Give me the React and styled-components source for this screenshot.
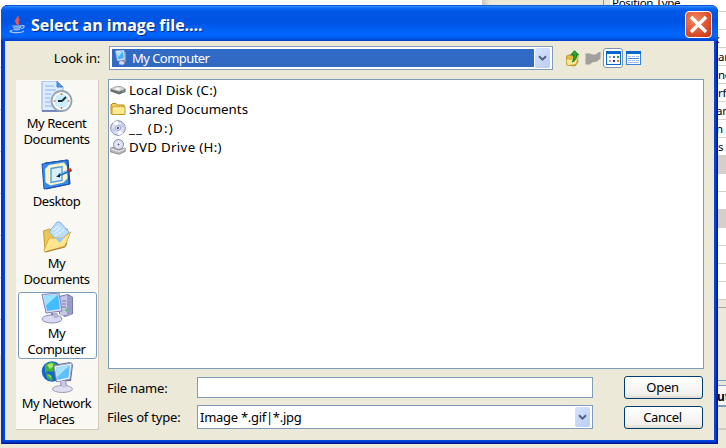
import React from 'react';
import styled, { createGlobalStyle } from 'styled-components';

const Global = createGlobalStyle`
  * { box-sizing: border-box; }
  body { margin: 0; overflow: hidden; font-family: "Noto Sans", "DejaVu Sans", sans-serif; font-size: 13px; color: #000; }
  svg { display: block; flex: none; }
  button, input { font: inherit; }
`;

const Screen = styled.div`
  position: relative;
  width: 726px;
  height: 448px;
  overflow: hidden;
  background: #ece9d8;
`;

/* Application behind the dialog */
const Backdrop = styled.div`
  display: grid;
  grid-template-columns: 482px 122px 122px;
  height: 448px;
`;
const LeftSheet = styled.div`
  height: 443px;
  padding-top: 26px;
  background: linear-gradient(#fff 355px, #ece9d8 355px);
`;
const SheetLine = styled.div`
  height: 42px;
  border-bottom: 1px solid #c3c8f0;
`;
const MidSheet = styled.div`
  height: 420px;
  background: linear-gradient(90deg, #cac7b9, #ece9d8 8px);
  border-right: 1px solid #7f9db9;
`;
const RightSheet = styled.div`
  display: flex;
  flex-direction: column;
  padding-left: 6px;
`;
const Cell = styled.div`
  flex: none;
  height: ${p => p.$h || 18}px;
  padding-left: ${p => p.$pad || 0}px;
  line-height: ${p => p.$line || 17}px;
  font-size: 11.5px;
  letter-spacing: -0.3px;
  white-space: nowrap;
  overflow: hidden;
  border-bottom: 1px solid #d4d0c8;
  background: ${p => (p.$shade ? '#d4d0c8' : '#fff')};
`;
const FootPanel = styled.div`
  height: 74px;
  margin-top: 7px;
  border-top: 1px solid #aca899;
  border-bottom: 1px solid #7f9db9;
`;
const FootButton = styled.div`
  height: 22px;
  margin-top: 4px;
  padding-left: 107px;
  border-top: 1px solid #7f9db9;
  border-bottom: 2px solid #7f9db9;
  background: #f7f6f1;
  font-weight: bold;
  font-size: 12px;
  line-height: 22px;
`;
const FootLine = styled.div`
  height: 23px;
  border-bottom: 2px solid #d0cdbf;
`;

/* Dialog */
const Dialog = styled.div`
  position: absolute;
  left: 1px;
  top: 5px;
  width: 717px;
  height: 439px;
  display: flex;
  flex-direction: column;
  padding: 0 4px 4px;
  border-radius: 7px 7px 0 0;
  background: #0044dc;
  box-shadow: inset 1px 0 #0831d9, inset -1px -1px #001890, inset -2px -2px #0024b4, inset 2px 0 #0030c8;
`;
const TitleBar = styled.div`
  flex: none;
  height: 36px;
  margin: 0 -4px;
  padding: 3px 6px 0 8px;
  display: flex;
  align-items: center;
  border-radius: 7px 7px 0 0;
  background: linear-gradient(#0048c8 0, #2b83fa 1.5px, #0f6cf3 3px, #0058e6 6px, #0053e1 16px, #005cf2 23px, #0066ff 29px, #0062f8 32px, #0048cc 35px, #003dd7 36px);
`;
const Title = styled.h1`
  flex: 1;
  margin: 0 0 0 5px;
  font: bold 16px/22px "Open Sans", sans-serif;
  letter-spacing: -0.05px;
  color: #fff;
  text-shadow: 1px 1px #0b2a80;
`;
const CloseButton = styled.button`
  width: 27px;
  height: 27px;
  padding: 0;
  display: grid;
  place-items: center;
  border: 1px solid #fff;
  border-radius: 4px;
  background: radial-gradient(circle at 35% 30%, #f08860, #e0532e 55%, #bf3412);
`;
const Body = styled.div`
  flex: 1;
  background: #ece9d8;
  display: grid;
  grid-template-columns: 83px 596px;
  column-gap: 9px;
  grid-template-rows: 24px 290px 54px;
  row-gap: 9px;
  padding: 5px 10px 0 11px;
`;
const LookRow = styled.div`
  grid-column: 1 / -1;
  display: flex;
  align-items: center;
`;
const Label = styled.label`
  text-align: ${p => p.$align || 'left'};
  width: ${p => p.$w}px;
  letter-spacing: -0.2px;
  white-space: nowrap;
`;
const Select = styled.div`
  display: flex;
  width: ${p => p.$w}px;
  height: 24px;
  margin-left: ${p => p.$ml || 0}px;
  padding: 2px;
  background: #fff;
  border: 1px solid #7f9db9;
`;
const SelectValue = styled.div`
  flex: 1;
  display: flex;
  align-items: center;
  gap: 3px;
  padding-left: ${p => (p.$active ? 1 : 0)}px;
  margin-right: 1px;
  color: ${p => (p.$active ? '#fff' : '#000')};
  background: ${p => (p.$active ? '#316ac5' : '#fff')};
  letter-spacing: ${p => (p.$active ? -0.55 : -0.28)}px;
`;
const DropArrow = styled.span`
  width: 15px;
  margin: -1px 0;
  display: grid;
  place-items: center;
  border-radius: 2px;
  background: linear-gradient(135deg, #d8e4ff, #b9cbf5);
`;
const Tools = styled.div`
  display: flex;
  align-items: center;
  margin-left: 10px;
`;
const ToolButton = styled.button`
  width: 20px;
  height: 20px;
  padding: 0;
  display: grid;
  place-items: center;
  border: 1px solid ${p => (p.$on ? '#7595b5' : 'transparent')};
  border-radius: 3px;
  background: ${p => (p.$on ? '#fff' : 'transparent')};
`;
const Places = styled.nav`
  grid-row: 2 / 4;
  height: 350px;
  margin-top: 1px;
  padding: 0 2px;
  background: #f9f8f3;
  border-right: 1px solid #cfccbd;
  border-bottom: 1px solid #cfccbd;
`;
const Place = styled.div`
  height: ${p => p.$h}px;
  width: 79px;
  padding: ${p => p.$top}px 2px 0 0;
  display: flex;
  flex-direction: column;
  align-items: center;
  gap: ${p => (p.$selected ? 0 : 2)}px;
  text-align: center;
  line-height: 16px;
  white-space: pre;
  border: solid ${p => (p.$selected ? '#7b9ebd' : 'transparent')};
  border-width: ${p => (p.$selected ? '1px' : '0 1px')};
  border-radius: 3px;
  background: ${p => (p.$selected ? '#fff' : 'transparent')};
`;
const PlaceName = styled.span`
  letter-spacing: -0.45px;
`;
const FileList = styled.div`
  background: #fff;
  border: 1px solid #7f9db9;
  font-size: 13.3px;
`;
const FileRow = styled.div`
  height: 19px;
  padding-left: 1px;
  display: flex;
  align-items: center;
  gap: 3px;
  letter-spacing: ${p => p.$ls || 0}px;
`;
const Form = styled.div`
  display: grid;
  grid-template-columns: 90px 396px 110px;
  grid-template-rows: 23px 24px;
  row-gap: 6px;
  align-items: center;
  align-content: start;
  margin: -2px 0 0 -1px;
`;
const Input = styled.input`
  width: 396px;
  height: 21px;
  padding: 0 3px;
  border: 1px solid #7f9db9;
  background: #fff;
  outline: 0;
`;
const Button = styled.button`
  width: 79px;
  height: 23px;
  margin-left: 31px;
  padding: 0 2px 0 0;
  line-height: 19px;
  letter-spacing: -0.3px;
  border: 1px solid #003c74;
  border-radius: 3px;
  color: #000;
  background: linear-gradient(#fff, #f2f1ec 80%, #dedbd0);
`;

const Chevron = () => (
  <svg width="9" height="7" viewBox="0 0 9 7"><path d="M1 1.2l3.5 3.5L8 1.2" fill="none" stroke="#4d6185" strokeWidth="2" /></svg>
);

const JavaIcon = () => (
  <svg width="17" height="18" viewBox="0 0 17 18" fill="none">
    <path d="M8.6 0.5c1.8 2-3 3.3-1.5 5.3.6.9 1.1 1.4.8 2.6M10.5 3.2C8 4.7 8.300 5.500 9.100 6.500c.6.8.2 1.500-.4 2" stroke="#f0564a" strokeWidth="1.700" />
    <path d="M3.500 9.500c-.5.9 8 1 9 0M4 11.300c1 1 6.500 1 8 0M4.600 13.300c1 .8 5 .8 6.500 0M12.800 9.700c3.500-.7 3 2.200-.6 3" stroke="#a9c6ec" strokeWidth="1.200" />
    <path d="M3.500 14.300c-5 1.300-1 2.400 4 2.300 4.500 0 8-.9 6.800-2" stroke="#a9c6ec" strokeWidth="1.200" />
  </svg>
);

const MiniMonitor = () => (
  <svg width="16" height="16" viewBox="0 0 16 16">
    <path d="M10 1.500l3 1v9l-3 2z" fill="#8d92bc" />
    <path d="M2.500 1l8.500-1 1 9.500-7.500 1.500z" fill="#ebf4ff" stroke="#9aaad1" strokeWidth=".7" />
    <path d="M3.500 2.200l6.500-1 1 7-5.800 1.400z" fill="#45b4f4" />
    <path d="M3.500 2.200l6.500-1-5 6z" fill="#a5e6fd" />
    <path d="M6 11.500l3-1 3 2.500-2 2-4-.4z" fill="#d8daf0" stroke="#777da7" strokeWidth=".5" />
  </svg>
);

const UpFolder = () => (
  <svg width="16" height="17" viewBox="0 0 16 17">
    <path d="M1.500 6l3-1 2 1 5-1 1.500 7-3 4-8-1z" fill="#e6c244" stroke="#a47b16" strokeWidth=".7" />
    <path d="M1.500 8.500l4 1 8-3-2.500 8L2 15.500z" fill="#ffec92" stroke="#b98c1b" strokeWidth=".6" />
    <path d="M9.500 .7L13.800 5h-2.300c0 4-1 6-4.500 7 1.500-2 2-4 1.600-7H5.700z" fill="#2ea52c" stroke="#086b12" strokeWidth=".8" />
  </svg>
);
const NewFolderDisabled = () => (
  <svg width="16" height="14" viewBox="0 0 16 14"><path d="M.5 2.500h5l1 1H11l1-1.500 3.500-1.500v7L12 10.500l-5 1-2 2H.5z" fill="#a0a09c" /></svg>
);
const ListIcon = () => (
  <svg width="15" height="14" viewBox="0 0 15 14" shapeRendering="crispEdges">
    <rect width="15" height="14" fill="#0867cf" /><rect x="1" y="3" width="13" height="10" fill="#fff" />
    <g><rect x="3" y="5" width="2" height="2" fill="#a3a3df" /><rect x="7" y="5" width="2" height="2" fill="#4a66ce" /><rect x="11" y="5" width="2" height="2" fill="#2b9d2b" /><rect x="3" y="9" width="2" height="2" fill="#e38d7d" /><rect x="7" y="9" width="2" height="2" fill="#153b94" /><rect x="11" y="9" width="2" height="2" fill="#d78414" /></g>
  </svg>
);
const DetailsIcon = () => (
  <svg width="15" height="14" viewBox="0 0 15 14" shapeRendering="crispEdges">
    <rect width="15" height="14" fill="#3284e0" /><rect width="15" height="3" fill="#0867cf" /><rect x="1" y="3" width="13" height="10" fill="#fff" />
    <path d="M2 5.500h3M6 5.500h3M10 5.500h3M2 9.500h3M6 9.500h3M10 9.500h3M2 11.500h11" stroke="#a5bee8" />
    <path d="M2 7.500h11" stroke="#4687cb" />
  </svg>
);

const RecentIcon = () => (
  <svg width="32" height="32" viewBox="0 0 32 32">
    <path d="M1 0h15l6 6v24H1z" fill="#dcecff" stroke="#8fabe4" />
    <path d="M16 0v6h6" fill="#4c93e4" stroke="#4c7fd0" />
    <path d="M4 5h9M4 9h11M4 13h6M4 17h5M4 21h5M4 25h7" stroke="#a9c6f2" strokeWidth="1.300" />
    <path d="M1 30h21" stroke="#5c6fae" strokeWidth="1.500" />
    <circle cx="20.500" cy="20" r="10" fill="#e4f5ff" stroke="#95a3b3" strokeWidth="1.800" />
    <circle cx="20.500" cy="20" r="8" fill="#cbeefd" stroke="#fff" strokeWidth="1.500" />
    <path d="M20.500 12v2M20.500 26v2M12.500 20h2M26.500 20h2" stroke="#e87936" strokeWidth="1.600" />
    <path d="M25 16l-4 4M17 20h4" stroke="#17273b" strokeWidth="1.800" fill="none" />
  </svg>
);
const DesktopIcon = () => (
  <svg width="32" height="32" viewBox="0 0 32 32">
    <path d="M4 4L27 1l2 24L5 30z" fill="#1e63c8" stroke="#174196" />
    <path d="M1 5l25-4 2 24-25 5z" fill="#368dea" stroke="#1d55b1" />
    <path d="M4 10l4-4 15-2.500 3 4 .5 12-4 4-13 3-5-3z" fill="#fff4c7" />
    <path d="M10 9.500l11-2v14l-11 2z" fill="#d9f0ff" stroke="#4b9ae2" strokeWidth="1.300" />
    <path d="M18 16l10-4" stroke="#1769bc" strokeWidth="2.800" /><path d="M19 15l7-3" stroke="#9bcfff" />
    <path d="M27.500 12l3-1.500" stroke="#c83523" strokeWidth="3.500" /><path d="M15 17.500l4-2.500v3.500z" fill="#15202f" />
  </svg>
);
const DocumentsIcon = () => (
  <svg width="32" height="32" viewBox="0 0 32 32">
    <path d="M2.500 10l6-2 4 3 14-3-2 15L4 29z" fill="#eec557" stroke="#c99c34" />
    <path d="M8 11L16 1l3 0 9 10-9 12z" fill="#b9ddfb" stroke="#86b1dc" />
    <path d="M12 9l6-4M13 12l7-5M14 15l9-6" stroke="#dff1ff" strokeWidth="1.200" />
    <path d="M3 29L8 17l14 0 7.500-6L24 25 4 31z" fill="#ffe68c" stroke="#dcaa40" />
    <path d="M14 17l5 5 7-9-4 4z" fill="#95cbf4" />
    <path d="M4.500 31l19.500-5 2-4" stroke="#a77c2b" fill="none" />
  </svg>
);
const ComputerIcon = () => (
  <svg width="32" height="32" viewBox="0 0 32 32">
    <path d="M18 3l9-2 5 3v17l-8 3-6-3z" fill="#7779ad" />
    <path d="M19 4l7-2v20l-7 1z" fill="#c7c6e6" /><path d="M26 2l5 2v17l-5 2z" fill="#9b9acb" />
    <path d="M21 8h4M21 11h4M21 14h4" stroke="#7779af" /><circle cx="26" cy="17" r="1.800" fill="#69bf82" />
    <path d="M1 1.500L18 0l3 18-16 2z" fill="#d7def5" stroke="#7e80b5" />
    <path d="M3 3l14-1.500 2 14.500-13 2z" fill="#45bcff" /><path d="M3 3l14-1.500L4.500 13z" fill="#98e3ff" />
    <path d="M10 20h6l2 5H9z" fill="#8889bc" /><ellipse cx="11" cy="26" rx="10" ry="4" fill="#dadaf0" stroke="#8f8fbb" />
    <path d="M12 20l4-.5 1 5-4 1z" fill="#b5b4d8" />
  </svg>
);
const NetworkIcon = () => (
  <svg width="32" height="32" viewBox="0 0 32 32">
    <circle cx="11" cy="10.500" r="10.300" fill="#1764ce" />
    <path d="M4 4l5-3 5 1 3 4-4 1-1 4-5-1-3 2zM5 12l5 2 2 4-2 2-4-3z" fill="#40b33d" />
    <path d="M6 4l5-2 2 3-4 3zM6 13l4 2 0 2z" fill="#a8e66d" />
    <path d="M12 4l17-3 3 3-2 16-15 1z" fill="#666b9f" />
    <path d="M13 5l18-3-2 16-13 3z" fill="#edf3ff" stroke="#9499bf" />
    <path d="M15 6.500l14-2.500-1.500 12.500-11 2.500z" fill="#5fc1fb" /><path d="M15 6.500l14-2.500-13 12z" fill="#a7e1ff" />
    <path d="M19 20h6l2 7h-8z" fill="#a3a4ca" /><ellipse cx="21.500" cy="28" rx="10" ry="3.500" fill="#dedeef" stroke="#9d9bb8" />
    <path d="M20 20h4l1 6-4 1z" fill="#c9c9e3" />
  </svg>
);

const Disk = () => (
  <svg width="16" height="16" viewBox="0 0 16 16">
    <path d="M.5 7L6 4.500h5L15.500 7v3L9 12.500.5 9.500z" fill="#6c6c6c" />
    <path d="M.5 7L6 4.500h5L15.500 7 9 9.500z" fill="#d4d4d4" stroke="#999" strokeWidth=".5" />
    <path d="M4 7l4-1 3 1-3 1z" fill="#fff" /><path d="M12 9.500l2-.7" stroke="#58d060" />
  </svg>
);
const Folder = () => (
  <svg width="16" height="16" viewBox="0 0 16 16">
    <path d="M1 13V4l1.500-1.500H6L7.500 4H14v9z" fill="#f3cc53" stroke="#b78719" />
    <path d="M2 6h13v7.500H2z" fill="#ffe98e" stroke="#c99a28" /><path d="M3 7h11" stroke="#fff8ca" />
  </svg>
);
const Disc = () => (
  <svg width="16" height="16" viewBox="0 0 16 16">
    <circle cx="8" cy="8" r="7.300" fill="#dddff3" stroke="#8587ae" />
    <path d="M8 8L3 2l5-1zM8 8l5 6-5 1z" fill="#fff" /><path d="M8 8l5-6 2 5zM8 8l-5 6-2-5z" fill="#c9cbee" />
    <circle cx="8" cy="8" r="2.500" fill="#fff" stroke="#9b9cc5" /><circle cx="8" cy="8" r="1.200" fill="#4657b6" />
  </svg>
);
const DvdDrive = () => (
  <svg width="16" height="16" viewBox="0 0 16 16">
    <circle cx="8.500" cy="5.500" r="5" fill="#dfe0f2" stroke="#898bab" /><circle cx="8.500" cy="5.500" r="1.500" fill="#5865b4" stroke="#fff" />
    <path d="M.7 9l3-1 2 2 5 .5 4.500-1.500v3.500L9 15.300.7 13z" fill="#b7b7bd" stroke="#77777d" strokeWidth=".7" />
    <path d="M1 10l8 2.500 6-2.500" stroke="#ededf2" fill="none" />
  </svg>
);

const places = [
  { text: 'My Recent\nDocuments', icon: <RecentIcon />, top: 1, h: 74 },
  { text: 'Desktop', icon: <DesktopIcon />, top: 5, h: 62 },
  { text: 'My\nDocuments', icon: <DocumentsIcon />, top: 5, h: 76 },
  { text: 'My\nComputer', icon: <ComputerIcon />, top: 0, h: 67, selected: true },
  { text: 'My Network\nPlaces', icon: <NetworkIcon />, top: 2, h: 70 },
];
const files = [
  { text: 'Local Disk (C:)', icon: <Disk />, ls: 0.15 },
  { text: 'Shared Documents', icon: <Folder /> },
  { text: '__ (D:)', icon: <Disc />, ls: 1.2 },
  { text: 'DVD Drive (H:)', icon: <DvdDrive />, ls: 0.32 },
];
const cells = [
  { text: 'Position Type', pad: 2, h: 12, line: 6 }, {}, { text: ':', pad: 107 }, { text: 'an', pad: 108 },
  { text: 'nc', pad: 108 }, { text: 'rfl', pad: 108 }, { text: 'an', pad: 106 }, { text: 'n', pad: 106 },
  { text: 's', pad: 108 }, { shade: true }, {}, {}, { shade: true }, {}, {}, {}, {},
];

export default function App() {
  return (
    <Screen>
      <Global />
      <Backdrop>
        <LeftSheet>{[0, 1, 2, 3, 4, 5, 6].map(i => <SheetLine key={i} />)}</LeftSheet>
        <MidSheet />
        <RightSheet>
          {cells.map((c, i) => <Cell key={i} $h={c.h} $pad={c.pad} $shade={c.shade} $line={c.line}>{c.text}</Cell>)}
          <FootPanel />
          <FootButton>ut</FootButton>
          <FootLine />
        </RightSheet>
      </Backdrop>
      <Dialog>
        <TitleBar>
          <JavaIcon />
          <Title>Select an image file....</Title>
          <CloseButton aria-label="Close">
            <svg width="19" height="19" viewBox="0 0 19 19"><path d="M2 2l15 15M17 2L2 17" stroke="#fff" strokeWidth="3.500" /></svg>
          </CloseButton>
        </TitleBar>
        <Body>
          <LookRow>
            <Label $w={84} $align="right">Look in:</Label>
            <Select $w={444} $ml={9}>
              <SelectValue $active><MiniMonitor />My Computer</SelectValue>
              <DropArrow><Chevron /></DropArrow>
            </Select>
            <Tools>
              <ToolButton aria-label="Up one level"><UpFolder /></ToolButton>
              <ToolButton aria-label="New folder"><NewFolderDisabled /></ToolButton>
              <ToolButton $on aria-label="List"><ListIcon /></ToolButton>
              <ToolButton aria-label="Details"><DetailsIcon /></ToolButton>
            </Tools>
          </LookRow>
          <Places>
            {places.map(p => (
              <Place key={p.text} $h={p.h} $top={p.top} $selected={p.selected}>{p.icon}<PlaceName>{p.text}</PlaceName></Place>
            ))}
          </Places>
          <FileList>
            {files.map(f => <FileRow key={f.text} $ls={f.ls}>{f.icon}<span>{f.text}</span></FileRow>)}
          </FileList>
          <Form>
            <Label $w={89}>File name:</Label>
            <Input aria-label="File name" />
            <Button>Open</Button>
            <Label $w={89}>Files of type:</Label>
            <Select $w={396}>
              <SelectValue>Image *.gif|*.jpg</SelectValue>
              <DropArrow><Chevron /></DropArrow>
            </Select>
            <Button>Cancel</Button>
          </Form>
        </Body>
      </Dialog>
    </Screen>
  );
}
